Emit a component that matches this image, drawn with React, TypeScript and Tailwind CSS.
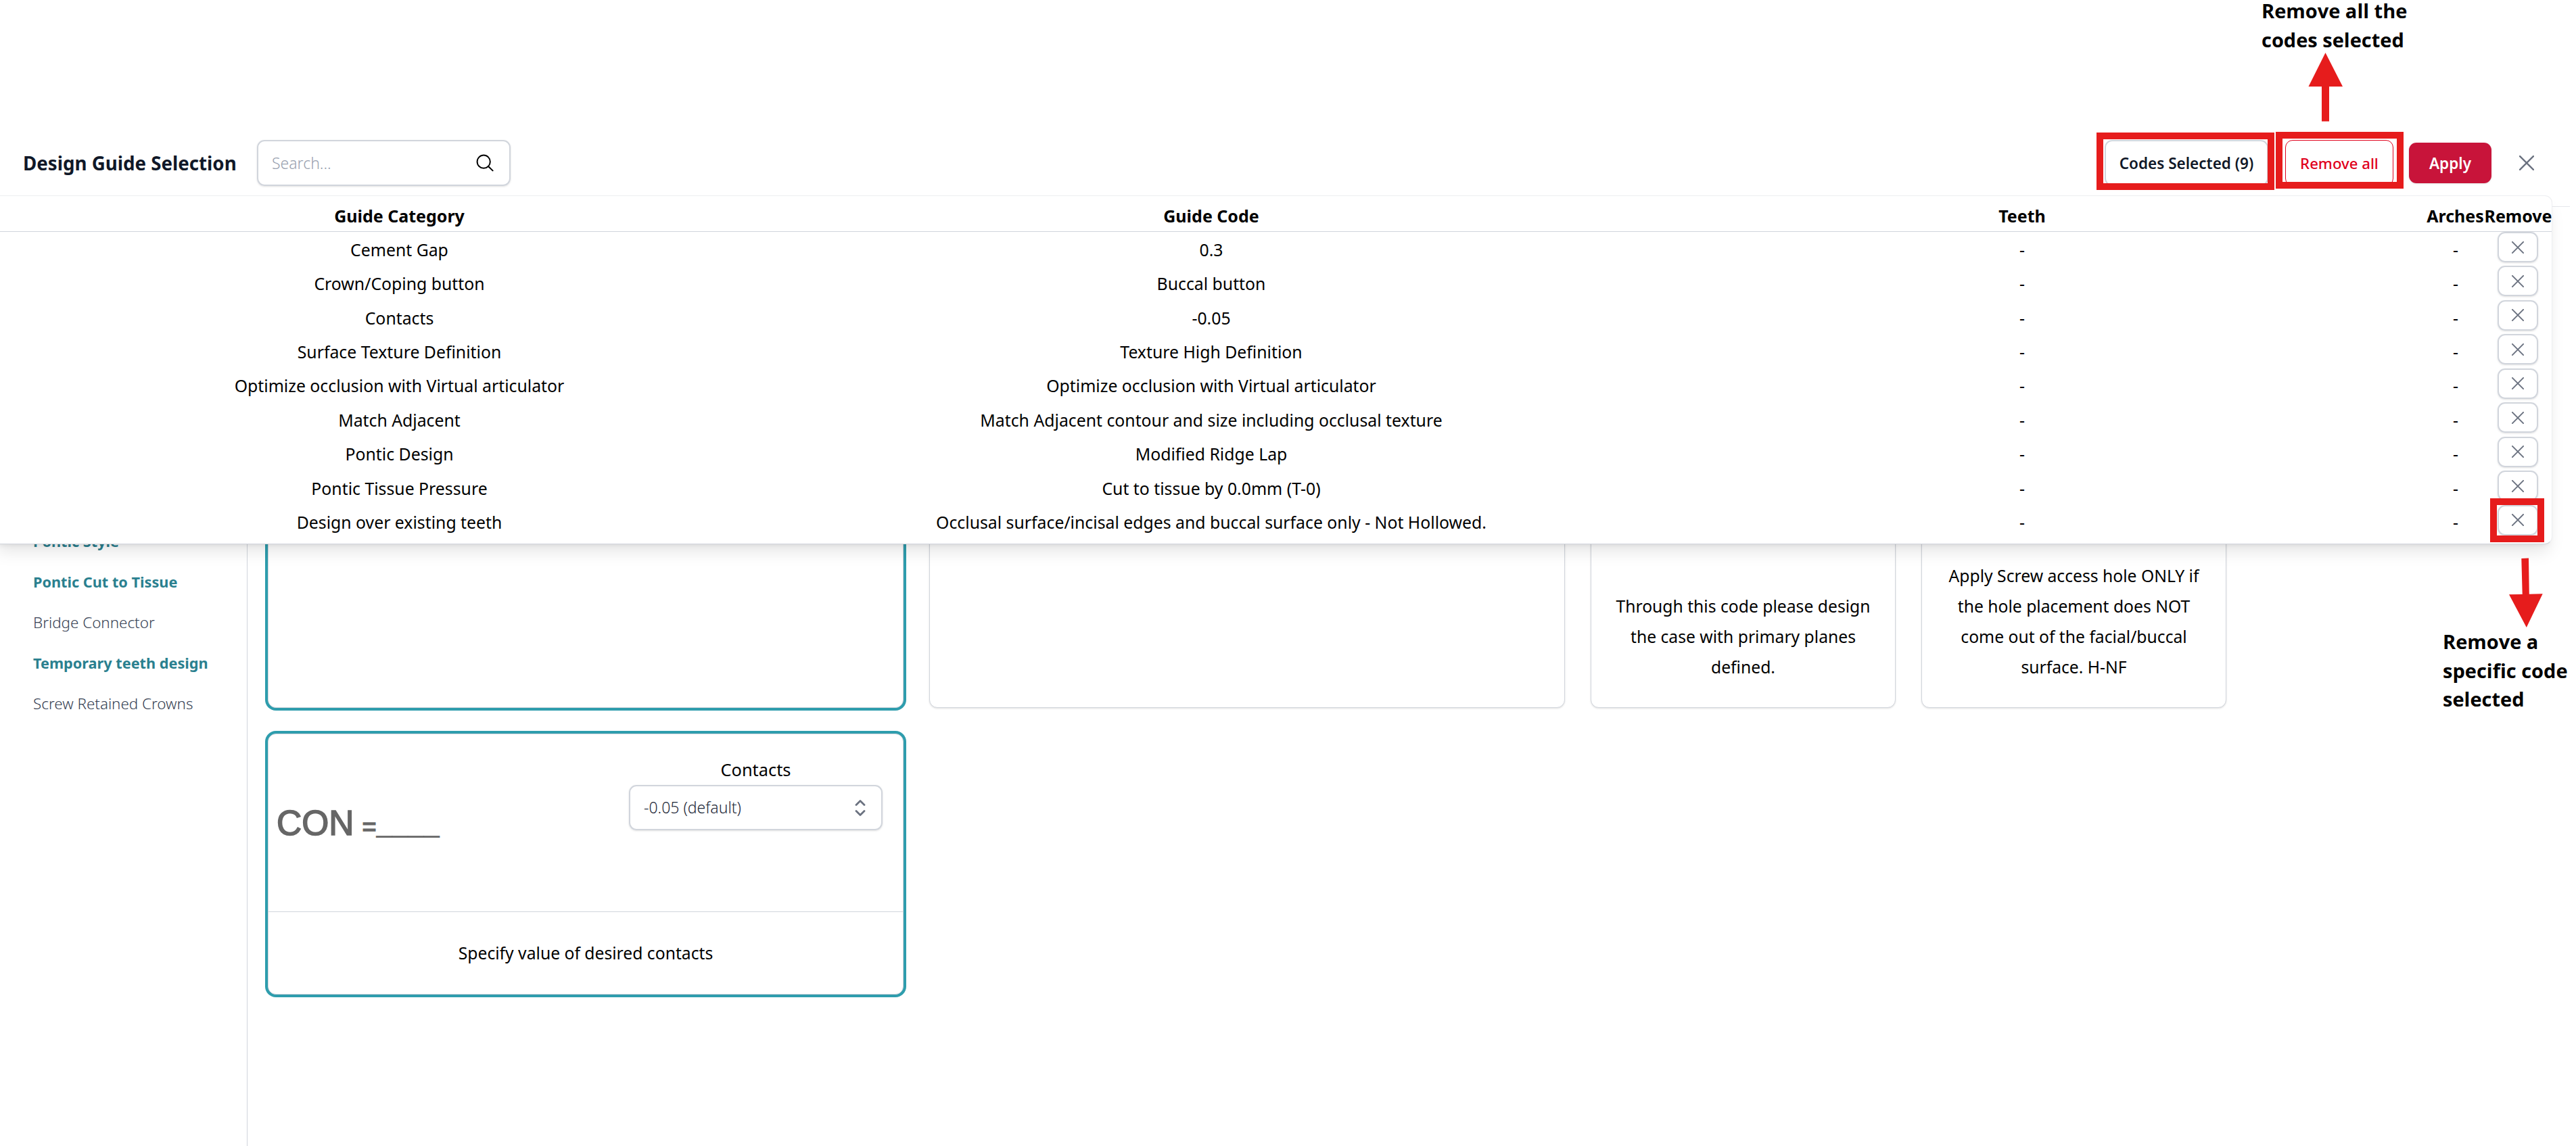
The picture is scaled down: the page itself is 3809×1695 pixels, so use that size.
import type { ReactNode } from "react";

const selections: [string, string][] = [
  ["Cement Gap", "0.3"],
  ["Crown/Coping button", "Buccal button"],
  ["Contacts", "-0.05"],
  ["Surface Texture Definition", "Texture High Definition"],
  ["Optimize occlusion with Virtual articulator", "Optimize occlusion with Virtual articulator"],
  ["Match Adjacent", "Match Adjacent contour and size including occlusal texture"],
  ["Pontic Design", "Modified Ridge Lap"],
  ["Pontic Tissue Pressure", "Cut to tissue by 0.0mm (T-0)"],
  ["Design over existing teeth", "Occlusal surface/incisal edges and buccal surface only - Not Hollowed."],
];

const sections = [
  { name: "Pontic Style", active: true },
  { name: "Pontic Cut to Tissue", active: true },
  { name: "Bridge Connector", active: false },
  { name: "Temporary teeth design", active: true },
  { name: "Screw Retained Crowns", active: false },
];

function Cross({ className }: { className: string }) {
  return (
    <svg viewBox="0 0 20 20" className={className} fill="none" stroke="#6b7280" strokeLinecap="round">
      <path d="M1 1 L19 19 M19 1 L1 19" strokeWidth="2.2" />
    </svg>
  );
}

function SearchIcon() {
  return (
    <svg viewBox="0 0 26 26" className="size-[26px]" fill="none" stroke="#000" strokeWidth="2" strokeLinecap="round">
      <circle cx="11.2" cy="11.2" r="9.6" />
      <path d="M18 18 L24.6 24.4" />
    </svg>
  );
}

function Highlight({ className }: { className: string }) {
  return <span className={"pointer-events-none absolute border-10 border-[#e61c1c] " + className} />;
}

function Header() {
  return (
    <header className="flex h-[306px] w-[3800px] shrink-0 items-center border-b border-gray-200 pt-[177px] pr-[53px] pl-[34px]">
      <h1 className="w-[346px] pt-[2px] text-[27.7px] font-bold whitespace-nowrap text-gray-900">Design Guide Selection</h1>
      <div className="flex h-[68px] w-[375px] items-center justify-between rounded-[11px] border-2 border-gray-300 pr-[23px] pl-5 shadow-sm">
        <span className="pt-px text-[23px] font-light text-gray-400">Search...</span>
        <SearchIcon />
      </div>
      <div className="ml-auto flex items-center">
        <button className="relative h-[68px] w-[242px] rounded-[11px] border-2 border-gray-300 pt-px text-[22.5px] font-semibold whitespace-nowrap text-gray-900">
          Codes Selected (9)
          <Highlight className="-top-[13px] -left-[14px] h-[85px] w-[263px]" />
        </button>
        <button className="relative ml-[25px] h-[68px] w-[160px] rounded-[11px] border border-[#e0001b] pt-px text-[22.2px] font-medium text-[#e0001b]">
          Remove all
          <Highlight className="-top-[13px] -left-[15px] h-[84px] w-[189px]" />
        </button>
        <button className="ml-[23px] h-[60px] w-[122px] rounded-[11px] bg-[#c8143a] pt-px text-[22.5px] font-semibold text-white shadow-sm">
          Apply
        </button>
        <Cross className="ml-[41px] size-[22px]" />
      </div>
    </header>
  );
}

const columns = "grid grid-cols-[1199px_1202px_1196px_86px_100px] justify-items-center";

function SelectedCodes() {
  return (
    <section className="absolute top-[289px] -left-[10px] h-[516px] w-[3784px] rounded-[11px] border border-gray-200/70 border-b-gray-300 bg-white text-[24.8px] text-black shadow-[0_16px_24px_-5px_rgba(0,0,0,0.1),0_6px_9px_-6px_rgba(0,0,0,0.1)]">
      <div className={columns + " h-[53px] items-center border-b border-gray-300 pt-[7px] text-[25px] font-bold"}>
        <span>Guide Category</span>
        <span>Guide Code</span>
        <span>Teeth</span>
        <span className="-ml-px">Arches</span>
        <span className="-ml-px">Remove</span>
      </div>
      {selections.map(([category, code]) => (
        <div key={category} className={columns + " h-[50.45px] items-center pt-[2px] whitespace-nowrap"}>
          <span>{category}</span>
          <span>{code}</span>
          <span>-</span>
          <span>-</span>
          <button className="relative -mt-[2px] -ml-[2px] flex h-[45px] w-[60px] items-center justify-center self-start rounded-[11px] border-2 border-gray-300 shadow-sm">
            <Cross className="size-[18px]" />
            {category === "Design over existing teeth" && (
              <Highlight className="-top-[12px] -left-[13px] h-[65px] w-[80px]" />
            )}
          </button>
        </div>
      ))}
    </section>
  );
}

function Sidebar() {
  return (
    <nav className="w-[366px] shrink-0 border-r border-gray-300 pt-[465px] pl-[49px]">
      {sections.map((s) => (
        <div
          key={s.name}
          className={
            "flex h-[60px] items-center whitespace-nowrap " +
            (s.active ? "text-[21.7px] font-bold text-[#2a808f]" : "text-[22.4px] font-light text-gray-700")
          }
        >
          {s.name}
        </div>
      ))}
    </nav>
  );
}

function Card({ className, children }: { className: string; children?: ReactNode }) {
  return (
    <div className={"flex flex-col rounded-[12px] border border-gray-300 bg-white text-center text-[24.7px] leading-[45px] text-black " + className}>
      {children}
    </div>
  );
}

function ContactsCard() {
  return (
    <Card className="h-[386px] w-[940px] shadow-sm ring-4 ring-[#2e9dad]">
      <div className="flex h-[263px] items-center border-b border-gray-300 pr-[30px] pl-[12px]">
        <div className="flex items-baseline pt-[6px] font-['Liberation_Sans'] text-[#666]">
          <span className="text-[51.5px] [-webkit-text-stroke:1.6px_#666]">CON</span>
          <span className="ml-[12px] text-[36px] [-webkit-text-stroke:1.4px_#666]">=</span>
          <span className="relative -top-[4px] text-[42px]">____</span>
        </div>
        <div className="ml-auto flex w-[375px] flex-col self-start pt-[29px]">
          <span className="h-[46px] text-[25.4px] leading-[46px]">Contacts</span>
          <div className="flex h-[67px] items-center justify-between rounded-[11px] border-2 border-gray-300 pr-[22px] pl-[20px] shadow-sm">
            <span className="text-[23px] font-light text-gray-800">-0.05 (default)</span>
            <svg viewBox="0 0 18 28" className="h-[28px] w-[18px]" fill="none" stroke="#6b7280" strokeWidth="2.8" strokeLinecap="round" strokeLinejoin="round">
              <path d="M3 9.5 L9 3.5 L15 9.5 M3 18.5 L9 24.5 L15 18.5" />
            </svg>
          </div>
        </div>
      </div>
      <p className="flex grow items-center justify-center">Specify value of desired contacts</p>
    </Card>
  );
}

function Cards() {
  return (
    <main className="flex flex-col gap-[38px] pl-[30px]">
      <div className="flex h-[741px] gap-[38px]">
        <Card className="w-[940px] ring-4 ring-[#2e9dad]" />
        <Card className="w-[940px] shadow" />
        <Card className="w-[451px] justify-end pb-[37px] shadow">
          <p>
            Through this code please design
            <br />
            the case with primary planes
            <br />
            defined.
          </p>
        </Card>
        <Card className="w-[451px] justify-end pb-[37px] shadow">
          <div className="mb-[31px] flex justify-between pr-[143px] pl-[137px]">
            <span className="h-[8px] w-[2px] bg-black" />
            <span className="h-[8px] w-[2px] bg-black" />
          </div>
          <p>
            Apply Screw access hole ONLY if
            <br />
            the hole placement does NOT
            <br />
            come out of the facial/buccal
            <br />
            surface. H-NF
          </p>
        </Card>
      </div>
      <ContactsCard />
    </main>
  );
}

function Annotations() {
  return (
    <div className="pointer-events-none font-['Open_Sans'] text-[29px] leading-[42.7px] font-bold whitespace-nowrap text-black">
      <p className="absolute -top-[5px] left-[3344px]">
        Remove all the
        <br />
        codes selected
      </p>
      <svg viewBox="0 0 52 102" className="absolute top-[78px] left-[3413px] h-[102px] w-[52px]" fill="#e61c1c">
        <path d="M25.5 0 L51 50 H31 V101.500 H20 V50 H0.500 Z" />
      </svg>
      <svg viewBox="0 0 52 104" className="absolute top-[825px] left-[3709px] h-[104px] w-[52px]" fill="#e61c1c">
        <path d="M19.300 1 L30 0.500 L30.800 53.700 L50.700 53.300 L26.800 103 L1 54.300 L20.700 54 Z" />
      </svg>
      <p className="absolute top-[928px] left-[3612px]">
        Remove a
        <br />
        specific code
        <br />
        selected
      </p>
    </div>
  );
}

export default function App() {
  return (
    <div className="relative flex h-[1695px] w-[3809px] flex-col overflow-hidden bg-white font-['Noto_Sans',sans-serif]">
      <Header />
      <div className="flex grow">
        <Sidebar />
        <Cards />
      </div>
      <SelectedCodes />
      <Annotations />
    </div>
  );
}
